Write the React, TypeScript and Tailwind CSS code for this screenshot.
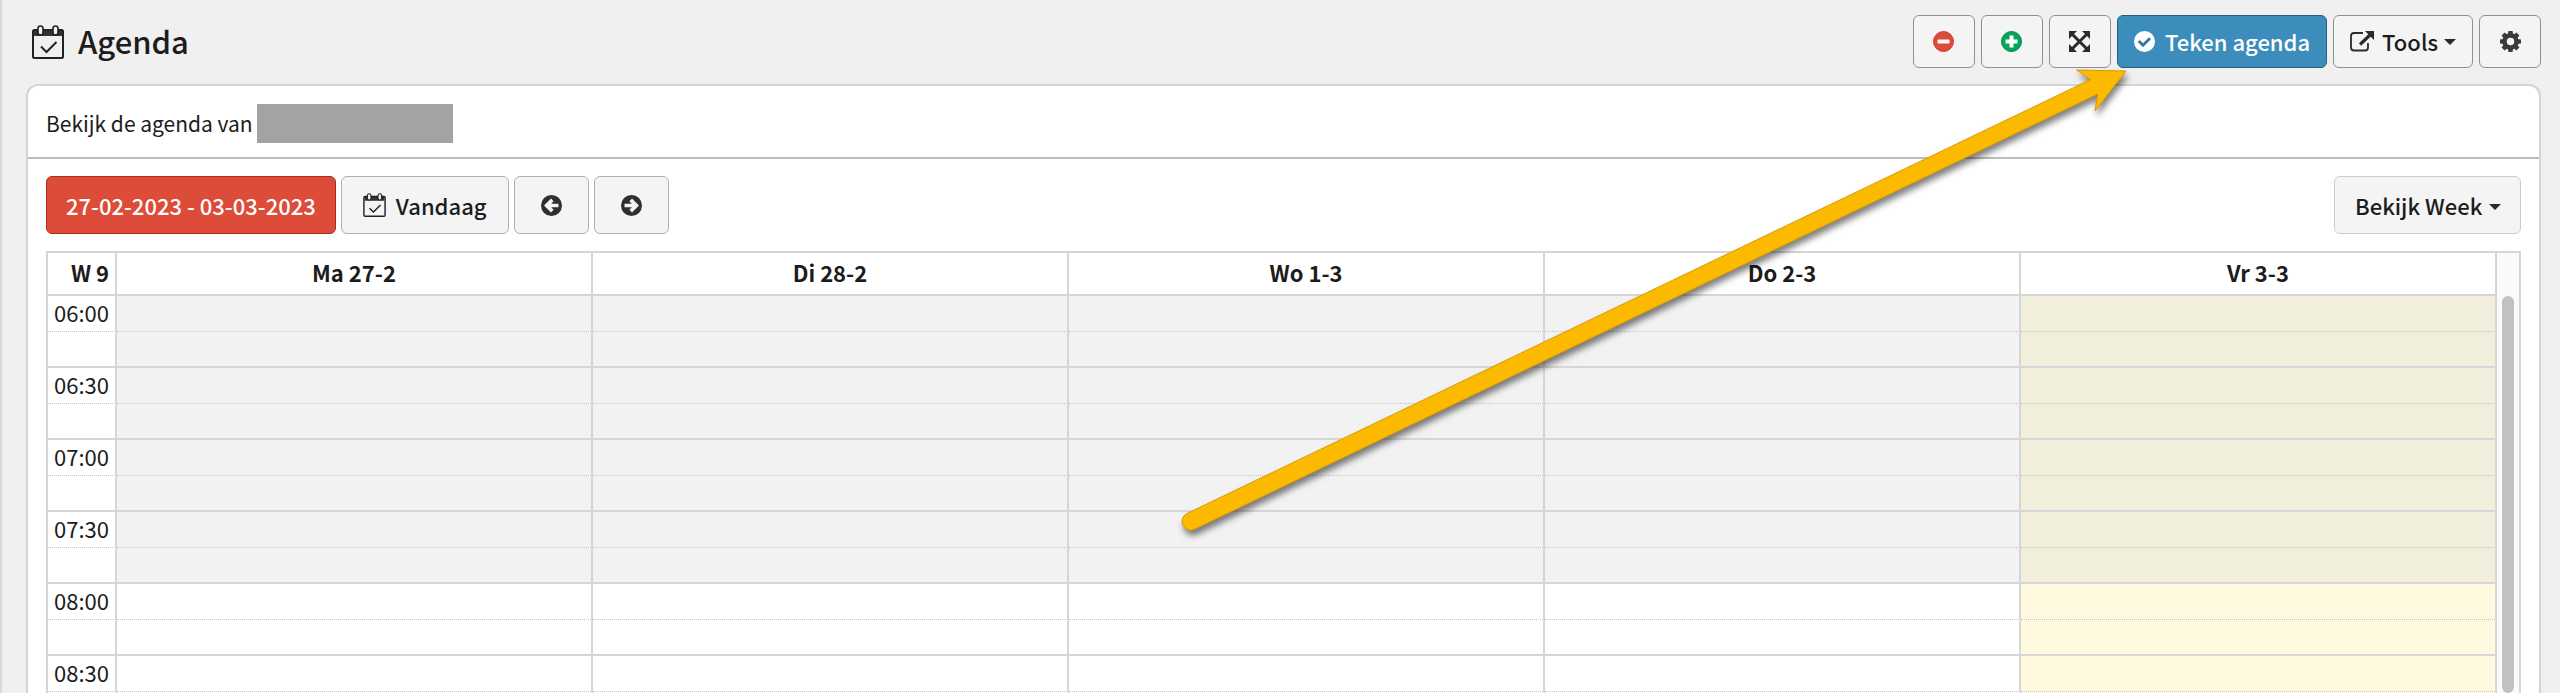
import type { ReactNode } from "react";
import { clsx } from "clsx";

const days = ["Ma 27-2", "Di 28-2", "Wo 1-3", "Do 2-3", "Vr 3-3"];
const today = "Vr 3-3";

const slots = [
  { time: "06:00", open: false },
  { time: "06:30", open: false },
  { time: "07:00", open: false },
  { time: "07:30", open: false },
  { time: "08:00", open: true },
  { time: "08:30", open: true },
];

function CalendarIcon({ className }: { className: string }) {
  return (
    <svg viewBox="0 0 32 34" className={className} aria-hidden="true">
      <path d="M2 5h28v6H2z" fill="#333" />
      <rect x="1" y="5" width="30" height="28" rx="1.5" fill="none" stroke="#222" strokeWidth="2" />
      <rect x="6" y="1" width="5" height="9" rx="2.5" fill="#f3f3f3" stroke="#222" strokeWidth="1.6" />
      <rect x="21" y="1" width="5" height="9" rx="2.5" fill="#f3f3f3" stroke="#222" strokeWidth="1.6" />
      <path d="M9 21.5l5.5 5.5L24.5 17" fill="none" stroke="#222" strokeWidth="2" />
    </svg>
  );
}

function MinusIcon() {
  return (
    <svg viewBox="0 0 21 21" className="size-[21px]" aria-hidden="true">
      <circle cx="10.5" cy="10.5" r="10" fill="#dd4b39" stroke="#c9402f" />
      <rect x="4.5" y="8.5" width="12" height="4" rx="1" fill="#fff" />
    </svg>
  );
}

function PlusIcon() {
  return (
    <svg viewBox="0 0 21 21" className="size-[21px]" aria-hidden="true">
      <circle cx="10.5" cy="10.5" r="10" fill="#00a65a" stroke="#0a8048" />
      <path d="M8.5 4.5h4v4h4v4h-4v4h-4v-4h-4v-4h4z" fill="#fff" />
    </svg>
  );
}

function ExpandIcon() {
  return (
    <svg viewBox="0 0 21 21" className="size-[21px]" fill="#2b2b2b" aria-hidden="true">
      <path d="M0 0h8L0 8zM21 0v8l-8-8zM0 21v-8l8 8zM21 21h-8l8-8z" />
      <path d="M3 3l15 15M18 3L3 18" stroke="#2b2b2b" strokeWidth="3" />
    </svg>
  );
}

function CheckIcon() {
  return (
    <svg viewBox="0 0 21 21" className="size-[21px]" aria-hidden="true">
      <circle cx="10.5" cy="10.5" r="10.5" fill="#fff" />
      <path d="M4.8 10l4.2 4.2 7-7" fill="none" stroke="#2f7aa8" strokeWidth="3" />
    </svg>
  );
}

function ExternalIcon() {
  return (
    <svg viewBox="0 0 24 21" className="h-[21px] w-6" fill="none" aria-hidden="true">
      <path d="M13 2H4a3 3 0 0 0-3 3v11.5a3 3 0 0 0 3 3h11a3 3 0 0 0 3-3V12" stroke="#2b2b2b" strokeWidth="1.8" />
      <path d="M10 13.5L20 4" stroke="#2b2b2b" strokeWidth="3.2" />
      <path d="M15 0h9v9z" fill="#2b2b2b" />
    </svg>
  );
}

function GearIcon() {
  return (
    <svg viewBox="0 0 21 21" className="size-[21px]" aria-hidden="true">
      <circle cx="10.5" cy="10.5" r="6" fill="none" stroke="#3a3a3a" strokeWidth="4.5" />
      {[0, 45, 90, 135].map((angle) => (
        <path key={angle} d="M8.4 0h4.2l.5 4H7.900zM8.400 21h4.200l.5-4H7.900z" fill="#3a3a3a" transform={`rotate(${angle} 10.5 10.5)`} />
      ))}
    </svg>
  );
}

function ArrowCircleIcon({ className }: { className?: string }) {
  return (
    <svg viewBox="0 0 21 21" className={clsx("size-[21px]", className)} aria-hidden="true">
      <circle cx="10.5" cy="10.5" r="10.5" fill="#2f2f2f" />
      <path d="M3 10.5L10 3.600l2.600 2.600-2.400 2.500H17.500v3.600H10.200l2.400 2.500L10 17.400z" fill="#f4f4f4" />
    </svg>
  );
}

function Caret({ className }: { className?: string }) {
  return (
    <svg viewBox="0 0 12 6" className={clsx("h-1.5 w-3", className)} fill="#2b2b2b" aria-hidden="true">
      <path d="M0 0h12L6 6z" />
    </svg>
  );
}

type ButtonProps = { className: string; label?: string; menu?: boolean; children: ReactNode };

function Button({ className, label, menu, children }: ButtonProps) {
  return (
    <button
      type="button"
      aria-label={label}
      aria-haspopup={menu ? "menu" : undefined}
      className={clsx("flex items-center justify-center rounded-md border font-medium whitespace-nowrap", className)}
    >
      {children}
    </button>
  );
}

function Header() {
  return (
    <header className="flex items-start justify-between pt-[15px]">
      <h1 className="flex h-[53px] items-center gap-3.5 pl-[6px] text-[31px] font-medium">
        <CalendarIcon className="h-[34px] w-8" />
        Agenda
      </h1>
      <div className="flex gap-1.5">
        <Button label="Uitzoomen" className="h-[53px] w-[62px] border-[#909090] bg-[#f4f4f4]"><MinusIcon /></Button>
        <Button label="Inzoomen" className="h-[53px] w-[62px] border-[#909090] bg-[#f4f4f4]"><PlusIcon /></Button>
        <Button label="Volledig scherm" className="h-[53px] w-[62px] border-[#909090] bg-[#f4f4f4]"><ExpandIcon /></Button>
        <Button className="h-[53px] gap-2.5 border-[#25607f] bg-[#3c8dbc] px-4 text-white">
          <CheckIcon />
          Teken agenda
        </Button>
        <Button menu className="h-[53px] gap-2 border-[#909090] bg-[#f4f4f4] px-4">
          <ExternalIcon />
          <span className="flex items-center gap-1.5">Tools <Caret /></span>
        </Button>
        <Button label="Instellingen" className="h-[53px] w-[62px] border-[#909090] bg-[#f4f4f4]"><GearIcon /></Button>
      </div>
    </header>
  );
}

function Toolbar() {
  return (
    <div className="flex justify-between py-[17px]">
      <div className="flex gap-[5px]">
        <Button className="h-[58px] border-[#b02a1b] bg-[#dd4b39] px-[19px] text-white">27-02-2023 - 03-03-2023</Button>
        <Button className="h-[58px] gap-2.5 border-[#b0b0b0] bg-[#f4f4f4] px-[21px]">
          <CalendarIcon className="h-6 w-[23px]" />
          Vandaag
        </Button>
        <Button label="Vorige week" className="h-[58px] w-[75px] border-[#b0b0b0] bg-[#f4f4f4]"><ArrowCircleIcon /></Button>
        <Button label="Volgende week" className="h-[58px] w-[75px] border-[#b0b0b0] bg-[#f4f4f4]"><ArrowCircleIcon className="rotate-180" /></Button>
      </div>
      <div className="relative">
        <select
          aria-label="Weergave"
          className="h-[58px] w-[187px] appearance-none rounded-md border border-[#ccc] bg-[#f4f4f4] pl-5 font-medium"
        >
          <option>Bekijk Week</option>
          <option>Bekijk Dag</option>
        </select>
        <Caret className="pointer-events-none absolute top-[28px] right-5" />
      </div>
    </div>
  );
}

function WeekGrid() {
  return (
    <div className="flex min-h-0 flex-1 border-2 border-b-0 border-[#d6d6d6]">
      <div className="min-w-0 flex-1 overflow-hidden">
        <table className="w-full table-fixed border-separate border-spacing-0">
          <thead>
            <tr className="h-[43px]">
              <th className="w-[69px] border-r-2 border-b-2 border-[#d6d6d6] pr-1.5 pb-1 text-right leading-8">W 9</th>
              {days.map((day) => (
                <th key={day} className="border-r-2 border-b-2 border-[#d6d6d6] pb-1 leading-8">{day}</th>
              ))}
            </tr>
          </thead>
          {slots.map((slot) => (
            <tbody key={slot.time}>
              {[0, 1].map((half) => (
                <tr key={half} className="h-9">
                  <th
                    scope="row"
                    className={clsx(
                      "border-r-2 border-[#d6d6d6] pr-1.5 text-right align-top leading-8 font-normal",
                      half ? "border-b-2" : "border-b border-b-[#c4c4c4] [border-bottom-style:dotted]",
                    )}
                  >
                    {half === 0 && slot.time}
                  </th>
                  {days.map((day) => (
                    <td
                      key={day}
                      className={clsx(
                        "border-r-2 border-[#d6d6d6]",
                        half ? "border-b-2" : "border-b border-b-[#c4c4c4] [border-bottom-style:dotted]",
                        day === today && (slot.open ? "bg-[#fef9df]" : "bg-[#f2eedc]"),
                        day !== today && !slot.open && "bg-[#f2f2f2]",
                      )}
                    />
                  ))}
                </tr>
              ))}
            </tbody>
          ))}
        </table>
      </div>
      {/* Scrollbar */}
      <div className="flex w-[22px] justify-center bg-[#fafafa] pt-[43px]">
        <div className="w-3 rounded-full bg-[#c1c1c1]" />
      </div>
    </div>
  );
}

function PointerArrow() {
  return (
    <svg
      viewBox="0 0 1000 510"
      className="pointer-events-none absolute top-[50px] right-[400px] h-[510px] w-[1000px] drop-shadow-[2px_5px_3px_rgba(0,0,0,0.5)]"
      aria-hidden="true"
    >
      <path
        d="M27 463.5L930.7 29.5L916.5 20L966 21L935 61L937.7 44L34.5 479.3A8.5 8.5 0 0 1 27 463.5Z"
        fill="#fbb900"
        stroke="#d99a00"
        strokeWidth="1"
      />
    </svg>
  );
}

export default function App() {
  return (
    <div className="relative flex h-screen flex-col overflow-hidden border-l-2 border-[#d3d9e3] bg-[#f0f0f0] pr-[19px] pl-6 text-[22px] text-[#1c1c1c] font-['Noto_Sans_CJK_SC',sans-serif]">
      <Header />
      <main className="mt-4 flex min-h-0 flex-1 flex-col rounded-t-xl border-2 border-b-0 border-[#d4d4d4] bg-white">
        <div className="flex h-[73px] items-center gap-1 border-b-2 border-[#bdbdbd] px-[18px] pt-1">
          <span className="text-[21px]">Bekijk de agenda van</span>
          <span className="h-[39px] w-[196px] bg-[#a3a3a3]" />
        </div>
        <div className="flex min-h-0 flex-1 flex-col px-[18px]">
          <Toolbar />
          <WeekGrid />
        </div>
      </main>
      <PointerArrow />
    </div>
  );
}
